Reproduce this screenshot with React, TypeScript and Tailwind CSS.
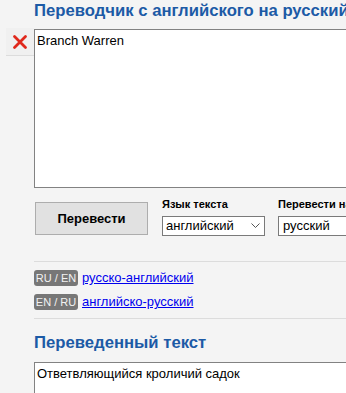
import React from 'react';

const font = { fontFamily: '"Liberation Sans", Arial, sans-serif' };

const App: React.FC = () => {
  return (
    <div className="w-[346px] h-[393px] overflow-hidden bg-[#f4f4f4] text-black" style={font}>
      <div className="w-[420px]">
        {/* Title */}
        <h1 className="pl-[34px] pt-[1px] text-[16.7px] leading-[20px] font-bold text-[#1c5aa6] whitespace-nowrap">
          Переводчик с английского на русский
        </h1>

        {/* Input row */}
        <div className="flex items-start mt-[8px] ml-[6px]">
          <button className="w-[28px] h-[28px] -mt-[1px] flex items-center justify-center bg-[#f0f0f0] border-b border-[#dcdcdc]">
            <svg width="16" height="16" viewBox="0 0 16 16">
              <path d="M2.5 2.5 L13.5 13.5 M13.5 2.5 L2.5 13.5" stroke="#e0281c" strokeWidth="2.8" strokeLinecap="round" />
            </svg>
          </button>
          <div className="w-[380px] h-[159px] bg-white border border-[#828282] px-[2px] pt-[3px] text-[13px] leading-[16px]">
            Branch Warren
          </div>
        </div>

        {/* Controls */}
        <div className="flex items-start pl-[35px] mt-[9px]">
          <button className="mt-[5px] w-[113px] h-[33px] bg-[#e1e1e1] border border-[#adadad] text-[13px] font-bold">
            Перевести
          </button>
          <div className="ml-[14px] flex flex-col">
            <span className="text-[11px] leading-[14px] font-bold">Язык текста</span>
            <div className="mt-[5px] w-[103px] h-[20px] bg-white border border-[#7a7a7a] flex items-center justify-between pl-[3px] pr-[4px] text-[13px]">
              <span>английский</span>
              <svg width="9" height="6" viewBox="0 0 9 6">
                <path d="M0.5 0.5 L4.5 4.5 L8.5 0.5" fill="none" stroke="#555" strokeWidth="1" />
              </svg>
            </div>
          </div>
          <div className="ml-[13px] flex flex-col">
            <span className="text-[11px] leading-[14px] font-bold whitespace-nowrap">Перевести на</span>
            <div className="mt-[5px] w-[103px] h-[20px] bg-white border border-[#7a7a7a] flex items-center pl-[4px] text-[13px]">
              <span>русский</span>
            </div>
          </div>
        </div>

        {/* Separator */}
        <div className="ml-[34px] mt-[25px] h-px bg-[#dcdcdc]" />

        {/* Dictionary links */}
        <div className="pl-[34px] pt-[8px] flex flex-col gap-[8px]">
          <div className="flex items-center gap-[4px]">
            <span className="w-[44px] h-[16px] rounded-[3px] bg-[#777] text-[#f2f2f2] text-[11px] leading-[16px] text-center">RU / EN</span>
            <a href="#" className="text-[13px] leading-[16px] text-[#0000ee] underline">русско-английский</a>
          </div>
          <div className="flex items-center gap-[4px]">
            <span className="w-[44px] h-[16px] rounded-[3px] bg-[#777] text-[#f2f2f2] text-[11px] leading-[16px] text-center">EN / RU</span>
            <a href="#" className="text-[13px] leading-[16px] text-[#0000ee] underline">английско-русский</a>
          </div>
        </div>

        {/* Separator */}
        <div className="ml-[34px] mt-[8px] h-px bg-[#dcdcdc]" />

        {/* Result */}
        <h2 className="pl-[34px] mt-[14px] text-[16.7px] leading-[20px] font-bold text-[#1c5aa6]">
          Переведенный текст
        </h2>
        <div className="ml-[34px] mt-[9px] w-[380px] h-[80px] bg-white border border-[#828282] px-[2px] pt-[3px] text-[13px] leading-[16px]">
          Ответвляющийся кроличий садок
        </div>
      </div>
    </div>
  );
};

export default App;
